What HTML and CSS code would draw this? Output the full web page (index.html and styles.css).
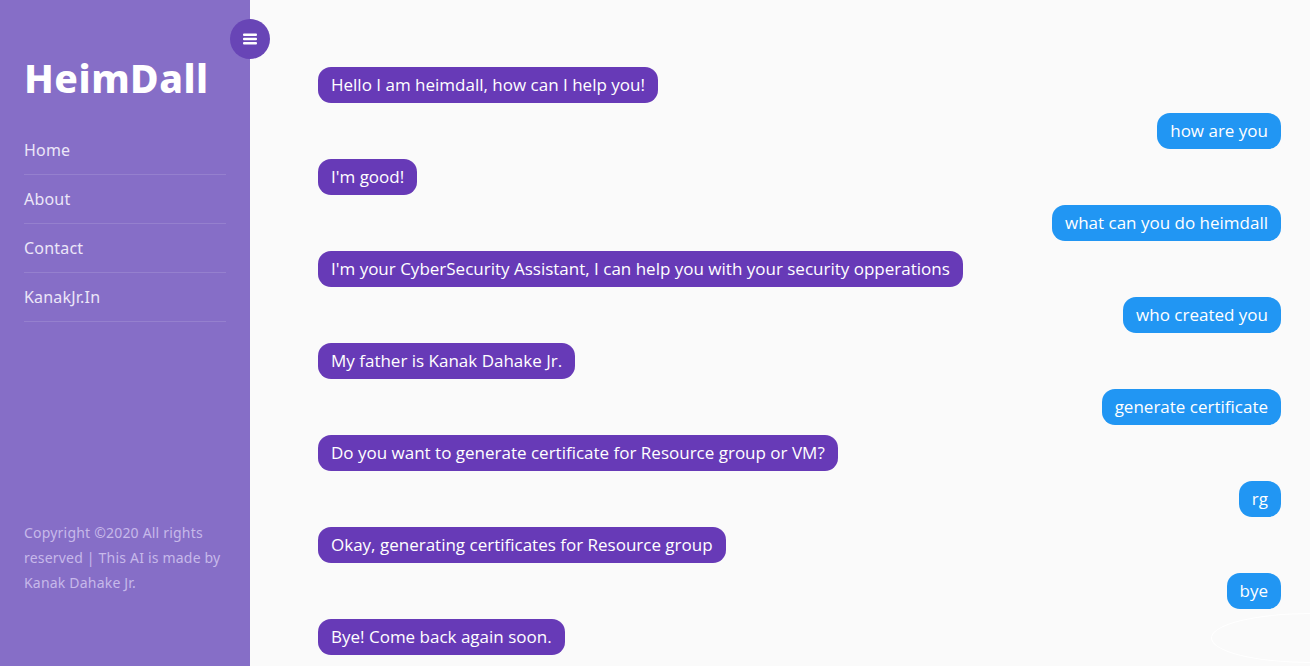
FILE: index.html
```html
<!DOCTYPE html>
<html>
<head>
<meta charset="utf-8">
<link rel="stylesheet" href="styles.css">
</head>
<body>
<div class="app">
  <aside class="sidebar">
    <button class="toggle" aria-label="menu">
      <svg width="14" height="12" viewBox="0 0 14 12"><rect x="0" y="0.5" width="14" height="2.4" rx="1" fill="#fff"/><rect x="0" y="4.8" width="14" height="2.4" rx="1" fill="#fff"/><rect x="0" y="9.1" width="14" height="2.4" rx="1" fill="#fff"/></svg>
    </button>
    <h1 class="logo">HeimDall</h1>
    <nav class="nav">
      <a class="nav-item">Home</a>
      <a class="nav-item">About</a>
      <a class="nav-item">Contact</a>
      <a class="nav-item">KanakJr.In</a>
    </nav>
    <p class="footer">Copyright ©2020 All rights reserved | This AI is made by Kanak Dahake Jr.</p>
  </aside>
  <main class="chat">
    <div class="msg bot">Hello I am heimdall, how can I help you!</div>
    <div class="msg user">how are you</div>
    <div class="msg bot">I'm good!</div>
    <div class="msg user">what can you do heimdall</div>
    <div class="msg bot">I'm your CyberSecurity Assistant, I can help you with your security opperations</div>
    <div class="msg user">who created you</div>
    <div class="msg bot">My father is Kanak Dahake Jr.</div>
    <div class="msg user">generate certificate</div>
    <div class="msg bot">Do you want to generate certificate for Resource group or VM?</div>
    <div class="msg user">rg</div>
    <div class="msg bot">Okay, generating certificates for Resource group</div>
    <div class="msg user">bye</div>
    <div class="msg bot">Bye! Come back again soon.</div>
  </main>
  <div class="input-ghost"></div>
</div>
</body>
</html>
```
FILE: styles.css
```css
* { box-sizing: border-box; }
html, body { margin: 0; padding: 0; height: 666px; overflow: hidden; }
body { background: #fafafa; font-family: "Open Sans", sans-serif; }
.app { display: flex; height: 666px; position: relative; overflow: hidden; }
.sidebar {
  width: 250px; flex: 0 0 250px; background: #866ec7;
  padding: 0 24px; display: flex; flex-direction: column; position: relative;
  font-family: "Noto Sans", "Open Sans", sans-serif;
}
.toggle {
  position: absolute; top: 19px; right: -20px; width: 40px; height: 40px;
  border-radius: 50%; background: #6845b6; border: none; padding: 0;
  display: flex; align-items: center; justify-content: center; z-index: 2;
}
.logo {
  margin: 54px 0 0; color: #fff; font-family: "Noto Sans", sans-serif; font-weight: 800;
  font-size: 39px; line-height: 48px; letter-spacing: 0.5px;
}
.nav { margin-top: 24px; display: flex; flex-direction: column; }
.nav-item {
  display: block; color: #ece6f8; font-size: 16px; line-height: 24px;
  padding: 12px 0 12px; border-bottom: 1px solid rgba(255,255,255,0.13);
  letter-spacing: 0.2px;
}
.footer {
  margin: auto 0 71px; color: #c7b9ea; font-size: 14px; line-height: 25px;
  letter-spacing: 0.2px;
}
.chat {
  flex: 1; display: flex; flex-direction: column; gap: 10px;
  padding: 67px 29px 0 68px;
}
.msg {
  color: #fff; font-size: 17px; line-height: 22px; padding: 7px 13px;
  border-radius: 13px; max-width: 80%;
}
.bot { background: #673ab7; align-self: flex-start; }
.user { background: #2196f3; align-self: flex-end; }
.input-ghost {
  position: absolute; left: 1211px; top: 613px; width: 200px; height: 50px;
  border: 1px solid #fff; border-radius: 50%;
}
```
